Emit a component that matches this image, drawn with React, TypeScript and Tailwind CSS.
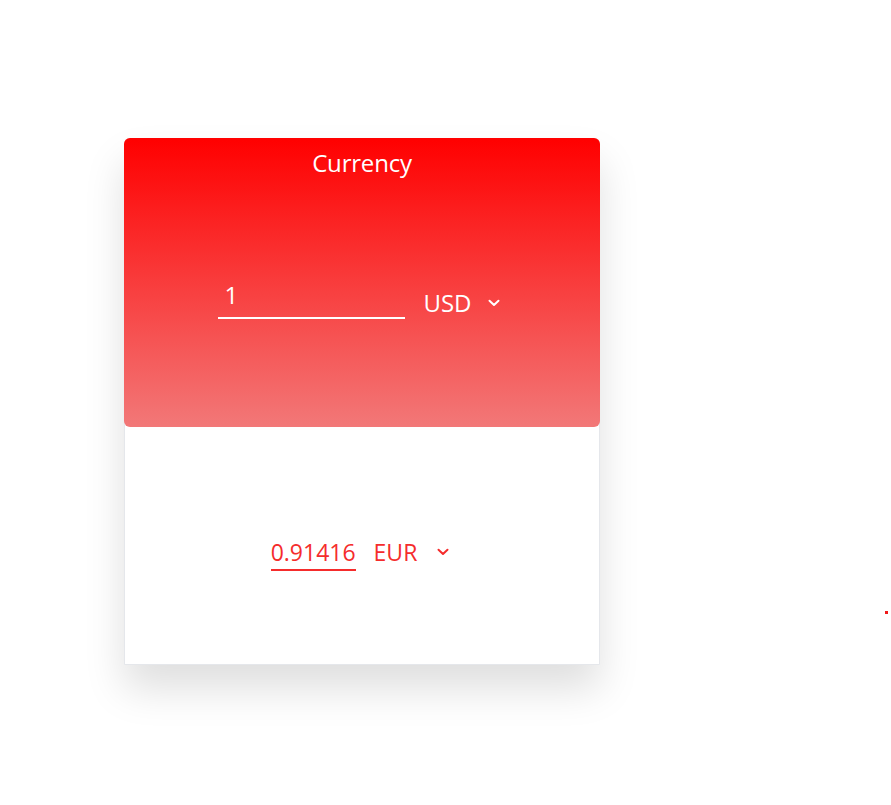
function Chevron({ className }: { className: string }) {
  return (
    <svg className={className} width="12" height="8" viewBox="0 0 12 8" fill="none">
      <path d="M1.5 1.8l4.5 4.2 4.5-4.2" stroke="currentColor" strokeWidth="2" strokeLinecap="round" strokeLinejoin="round" />
    </svg>
  );
}

export default function App() {
  return (
    <main className="relative min-h-[805px] w-full bg-white pl-[124px] pt-[138px] font-['Open_Sans','Noto_Sans',sans-serif]">
      <div className="w-[476px] h-[527px] flex flex-col rounded-t-md border border-gray-200 bg-white shadow-[0_24px_40px_rgba(0,0,0,0.13)]">
        <div className="h-[289px] -m-px mb-0 flex flex-col rounded-md bg-[linear-gradient(to_bottom,#ff0000,#f27878)] text-white">
          <h1 className="pt-[10px] text-center text-[24px] leading-[30px] tracking-[-0.2px]">Currency</h1>
          <div className="flex flex-1 items-center justify-center pb-[6px] pr-[6px]">
            <div className="flex items-end gap-[18px]">
              <div className="w-[187px] border-b-2 border-white pl-[6px] pb-[7px] text-[24px] leading-[30px]">1</div>
              <div className="flex items-center gap-[16px] pb-[1px] text-[24px] leading-[30px]">
                <span>USD</span>
                <Chevron className="text-white" />
              </div>
            </div>
          </div>
        </div>
        <div className="flex flex-1 items-center justify-center pt-[16px] pr-[4px]">
          <div className="flex items-start gap-[18px] text-[#f52c2c]">
            <span className="border-b-2 border-[#f52c2c] pb-[2px] text-[23px] leading-[30px]">0.91416</span>
            <div className="flex items-center gap-[20px] text-[23px] leading-[30px]">
              <span>EUR</span>
              <Chevron className="" />
            </div>
          </div>
        </div>
      </div>
      <span className="absolute left-[885px] top-[611px] h-[3px] w-[3px] bg-[#f01818]" />
    </main>
  );
}
